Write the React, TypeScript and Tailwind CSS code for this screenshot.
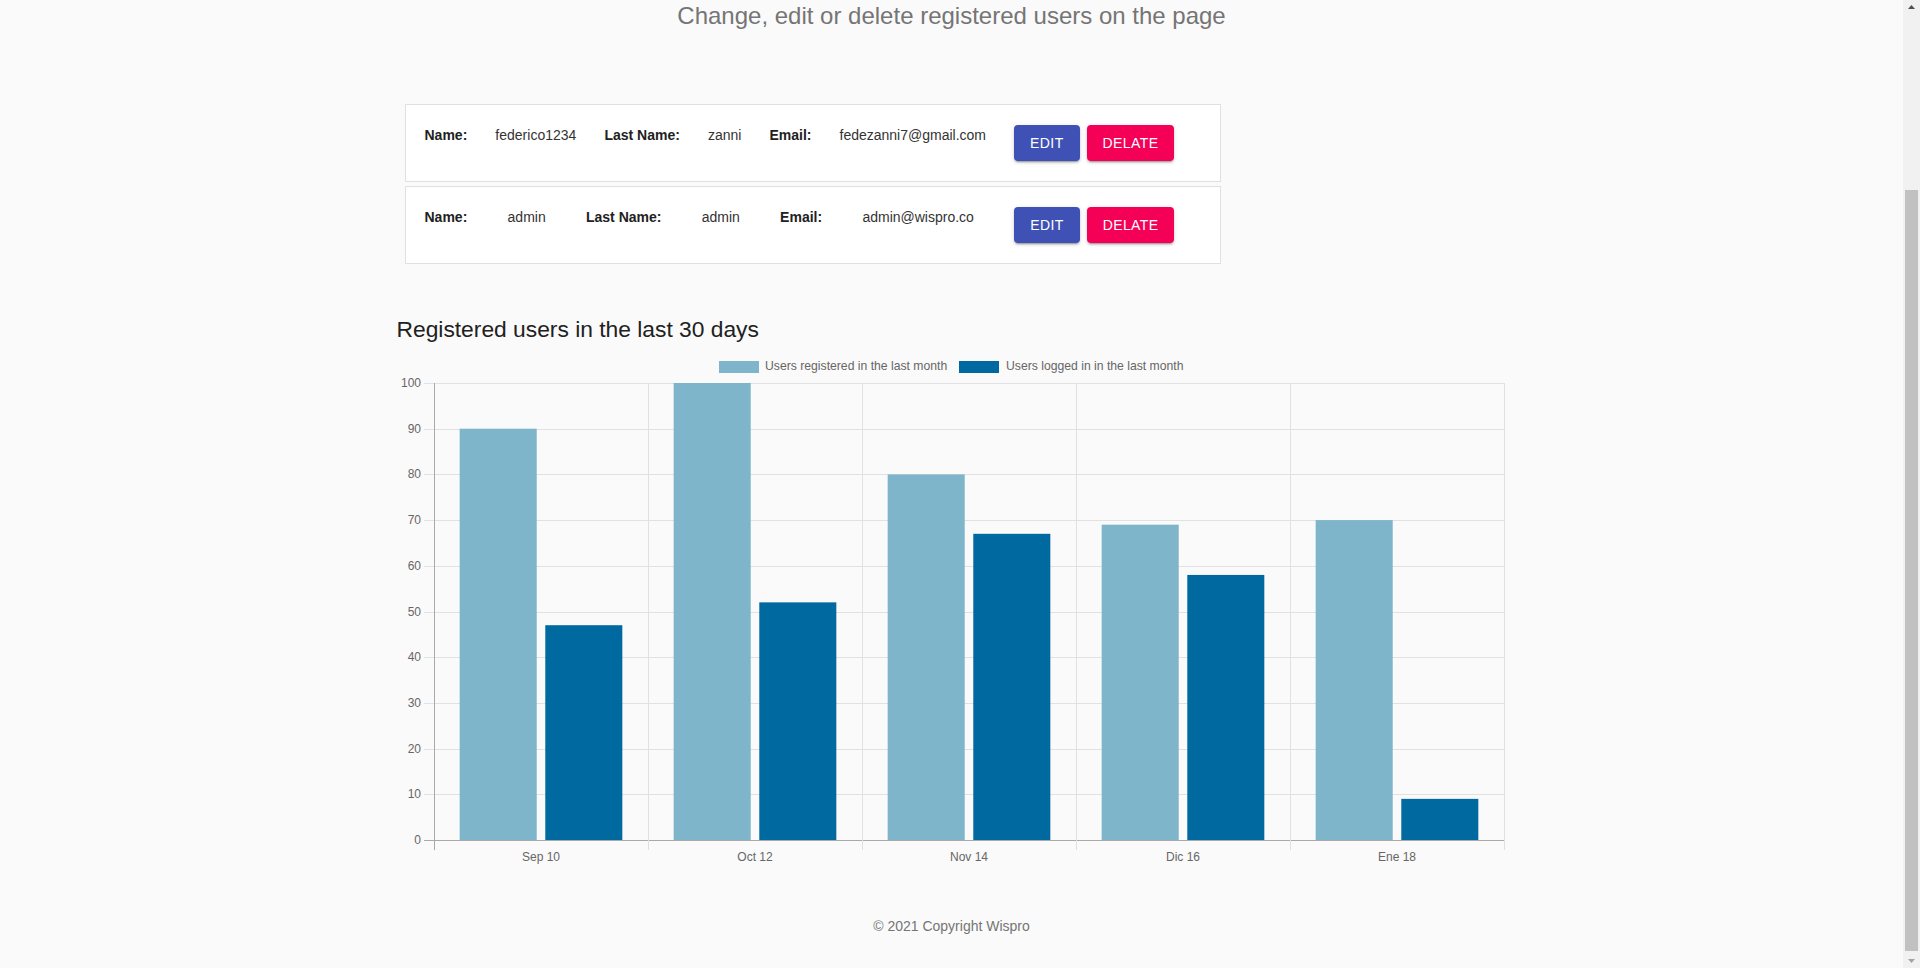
const users = [
  { name: 'federico1234', lastName: 'zanni', email: 'fedezanni7@gmail.com' },
  { name: 'admin', lastName: 'admin', email: 'admin@wispro.co' },
]

const months = [
  { label: 'Sep 10', registered: 90, logged: 47 },
  { label: 'Oct 12', registered: 100, logged: 52 },
  { label: 'Nov 14', registered: 80, logged: 67 },
  { label: 'Dic 16', registered: 69, logged: 58 },
  { label: 'Ene 18', registered: 70, logged: 9 },
]

const LIGHT = '#7eb5ca'
const DARK = '#0069a0'

// chart geometry, in page pixels (the svg viewBox is aligned to the page)
const X0 = 434
const X1 = 1504
const Y0 = 840
const Y100 = 383
const CAT = (X1 - X0) / months.length
const yOf = (v: number) => Y0 - ((Y0 - Y100) * v) / 100

function UserCard({ name, lastName, email }: { name: string; lastName: string; email: string }) {
  return (
    <div className="bg-white border border-[#e0e0e0] pl-[19px] pr-[45px] pt-5 pb-5">
      <div className="flex items-start justify-between text-[14px] leading-5">
        <span className="font-bold text-[#212121]">Name:</span>
        <span className="text-[#333]">{name}</span>
        <span className="font-bold text-[#212121]">Last Name:</span>
        <span className="text-[#333]">{lastName}</span>
        <span className="font-bold text-[#212121]">Email:</span>
        <span className="text-[#333]">{email}</span>
        <div className="flex gap-[7px]">
          <button className="h-9 min-w-16 px-4 rounded bg-[#3f51b5] text-white text-[14px] leading-6 tracking-[0.4px] uppercase shadow-[0_3px_1px_-2px_rgba(0,0,0,0.2),0_2px_2px_0_rgba(0,0,0,0.14),0_1px_5px_0_rgba(0,0,0,0.12)]">
            Edit
          </button>
          <button className="h-9 min-w-16 px-4 rounded bg-[#f50057] text-white text-[14px] leading-6 tracking-[0.4px] uppercase shadow-[0_3px_1px_-2px_rgba(0,0,0,0.2),0_2px_2px_0_rgba(0,0,0,0.14),0_1px_5px_0_rgba(0,0,0,0.12)]">
            Delate
          </button>
        </div>
      </div>
    </div>
  )
}

function BarChart() {
  const ticks = [0, 10, 20, 30, 40, 50, 60, 70, 80, 90, 100]
  return (
    <svg viewBox="397 345 1110 535" width={1110} height={535} className="block">
      {/* legend */}
      <rect x={719} y={361} width={40} height={12} fill={LIGHT} />
      <text x={765} y={367} fontSize={12.2} fill="#666" dominantBaseline="middle">
        Users registered in the last month
      </text>
      <rect x={959} y={361} width={40} height={12} fill={DARK} />
      <text x={1006} y={367} fontSize={12.2} fill="#666" dominantBaseline="middle">
        Users logged in in the last month
      </text>

      {/* horizontal grid + y labels */}
      {ticks.map((t) => {
        const y = Math.round(yOf(t)) + 0.5
        return (
          <g key={t}>
            <line x1={424} x2={X1} y1={y} y2={y} stroke={t === 0 ? '#a9a9a9' : '#e1e1e1'} strokeWidth={1} />
            <text x={421} y={y} fontSize={12} fill="#666" textAnchor="end" dominantBaseline="middle">
              {t}
            </text>
          </g>
        )
      })}

      {/* vertical grid */}
      {[0, 1, 2, 3, 4, 5].map((i) => {
        const x = Math.round(X0 + CAT * i) + 0.5
        return <line key={i} x1={x} x2={x} y1={Y100} y2={850} stroke={i === 0 ? '#a9a9a9' : '#e1e1e1'} strokeWidth={1} />
      })}

      {/* bars: 80% of the category, 90% of each slot */}
      {months.map((m, i) => {
        const cs = X0 + CAT * i
        const w = CAT * 0.4 * 0.9
        const lx = cs + CAT * 0.1 + CAT * 0.02
        const dx = lx + CAT * 0.4
        return (
          <g key={m.label}>
            <rect x={lx} y={yOf(m.registered)} width={w} height={Y0 - yOf(m.registered)} fill={LIGHT} />
            <rect x={dx} y={yOf(m.logged)} width={w} height={Y0 - yOf(m.logged)} fill={DARK} />
            <text x={cs + CAT / 2} y={858} fontSize={12} fill="#666" textAnchor="middle" dominantBaseline="middle">
              {m.label}
            </text>
          </g>
        )
      })}
    </svg>
  )
}

function FakeScrollbar() {
  return (
    <div className="w-[17px] h-full bg-[#f1f1f1] flex flex-col items-center">
      <svg width={17} height={17} className="shrink-0">
        <path d="M5 9 L8.5 5 L12 9 Z" fill="#505050" />
      </svg>
      <div className="h-[173px]" />
      <div className="w-[13px] h-[761px] bg-[#c1c1c1]" />
      <div className="flex-1" />
      <svg width={17} height={17} className="shrink-0">
        <path d="M5 8 L8.5 12 L12 8 Z" fill="#a3a3a3" />
      </svg>
    </div>
  )
}

export default function App() {
  return (
    <div className="h-[968px] w-full overflow-hidden bg-[#fafafa] flex font-['Liberation_Sans',Arial,sans-serif]">
      <div className="flex-1 flex flex-col">
        <h2 className="text-center text-[24px] leading-8 text-[#757575]">
          Change, edit or delete registered users on the page
        </h2>

        <div className="mx-auto w-[1110px]">
          <div className="ml-2 w-[816px] mt-[72px] flex flex-col gap-1">
            {users.map((u) => (
              <UserCard key={u.name} {...u} />
            ))}
          </div>

          <h3 className="mt-[49px] text-[22.8px] leading-8 text-[#212121]">Registered users in the last 30 days</h3>

          <BarChart />
        </div>

        <footer className="mt-[36px] text-center text-[14px] leading-5 text-[#757575]">© 2021 Copyright Wispro</footer>
      </div>
      <FakeScrollbar />
    </div>
  )
}
